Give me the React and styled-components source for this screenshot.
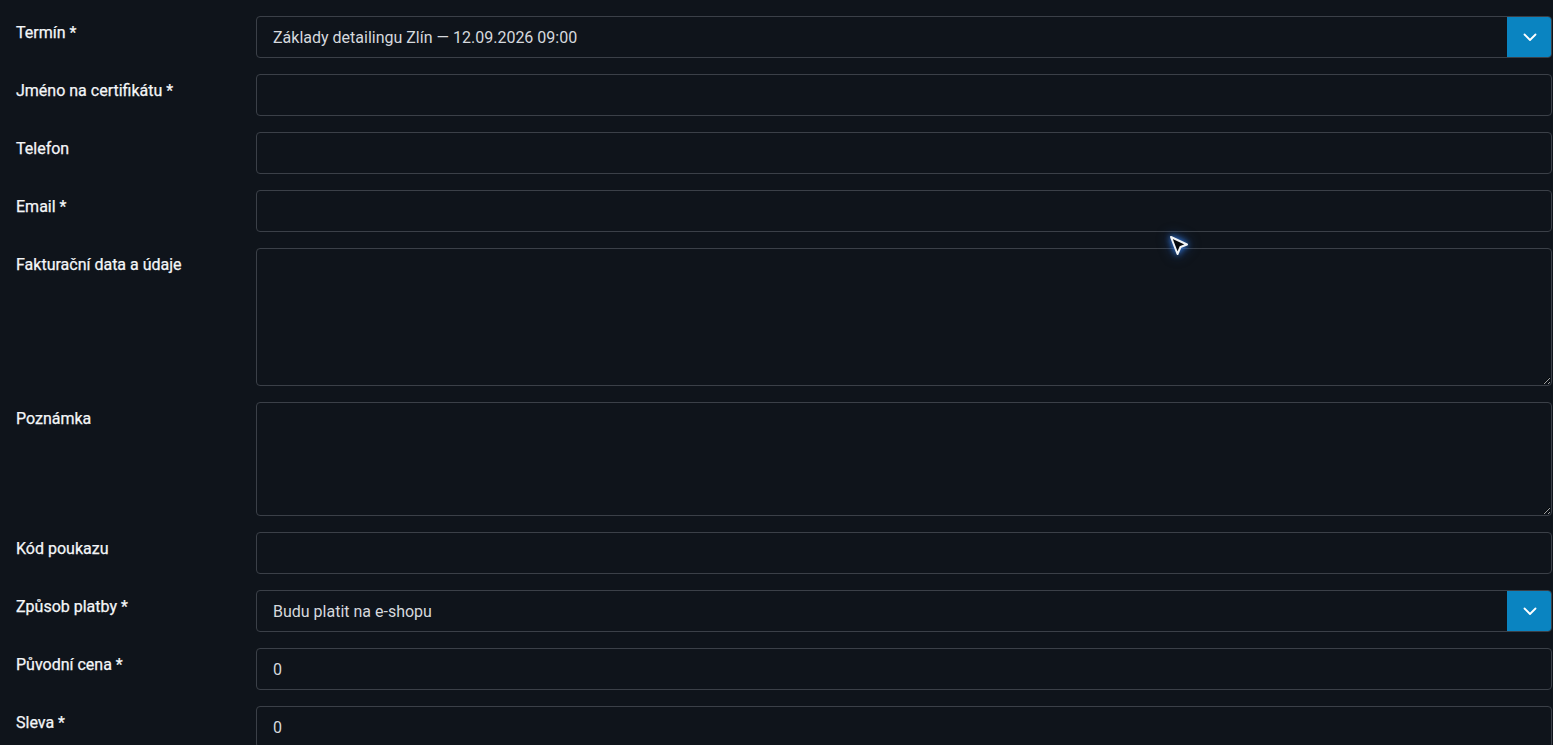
import React from "react";
import styled, { createGlobalStyle } from "styled-components";

const GlobalStyle = createGlobalStyle`
  html, body {
    margin: 0;
    padding: 0;
    background: #0f141b;
  }
  body {
    font-family: Roboto, "Noto Sans", "Liberation Sans", sans-serif;
    color: #e6e8eb;
  }
  * { box-sizing: border-box; }
`;

const Page = styled.div`
  position: relative;
  min-height: 745px;
  background: #0f141b;
  overflow: hidden;
`;

const Form = styled.form`
  display: grid;
  grid-template-columns: 240px 1fr;
  row-gap: 16px;
  padding: 16px 1px 16px 16px;
`;

const Label = styled.label`
  font-size: 16px;
  line-height: 19px;
  font-weight: 400;
  color: #f4f6f8;
  padding-top: 7px;
  -webkit-text-stroke: 0.25px #f4f6f8;
`;

const fieldBase = `
  width: 100%;
  background: #0f141b;
  border: 1px solid #3b4048;
  border-radius: 4px;
  color: #d6d9de;
  font-family: Roboto, "Noto Sans", "Liberation Sans", sans-serif;
  font-size: 16px;
  outline: none;
`;

const TextInput = styled.input`
  ${fieldBase}
  height: 42px;
  padding: 0 16px;
`;

const TextArea = styled.textarea`
  ${fieldBase}
  height: ${(p) => p.$h}px;
  padding: 10px 16px;
  resize: vertical;
  display: block;
`;

const SelectBox = styled.div`
  ${fieldBase}
  height: 42px;
  display: flex;
  align-items: stretch;
  overflow: hidden;
`;

const SelectValue = styled.div`
  flex: 1;
  display: flex;
  align-items: center;
  padding: 0 16px;
  color: #d6d9de;
`;

const SelectButton = styled.div`
  width: 45px;
  margin: -1px -1px -1px 0;
  background: #0a84c1;
  border-radius: 0 4px 4px 0;
  display: flex;
  align-items: center;
  justify-content: center;
`;

const Pointer = styled.svg`
  position: absolute;
  left: 1162px;
  top: 229px;
  filter: drop-shadow(0 0 3px rgba(60, 140, 255, 0.9)) drop-shadow(0 0 6px rgba(40, 110, 220, 0.5));
`;

const Chevron = () => (
  <svg width="14" height="9" viewBox="0 0 14 9" fill="none">
    <path d="M1.5 1.5 7 7l5.5-5.5" stroke="#ffffff" strokeWidth="1.8" strokeLinecap="round" strokeLinejoin="round" />
  </svg>
);

const Select = ({ value }) => (
  <SelectBox>
    <SelectValue>{value}</SelectValue>
    <SelectButton>
      <Chevron />
    </SelectButton>
  </SelectBox>
);

export default function App() {
  return (
    <Page>
      <GlobalStyle />
      <Form>
        <Label>Termín *</Label>
        <Select value="Základy detailingu Zlín — 12.09.2026 09:00" />

        <Label>Jméno na certifikátu *</Label>
        <TextInput defaultValue="" />

        <Label>Telefon</Label>
        <TextInput defaultValue="" />

        <Label>Email *</Label>
        <TextInput defaultValue="" />

        <Label>Fakturační data a údaje</Label>
        <TextArea $h={138} defaultValue="" />

        <Label>Poznámka</Label>
        <TextArea $h={114} defaultValue="" />

        <Label>Kód poukazu</Label>
        <TextInput defaultValue="" />

        <Label>Způsob platby *</Label>
        <Select value="Budu platit na e-shopu" />

        <Label>Původní cena *</Label>
        <TextInput defaultValue="0" />

        <Label>Sleva *</Label>
        <TextInput defaultValue="0" />
      </Form>
      <Pointer width="32" height="34" viewBox="0 0 32 34">
        <path d="M9 8 L25 15.5 L18.5 18 L15.5 25 Z" fill="#06080c" stroke="#f2f4f7" strokeWidth="2" strokeLinejoin="round" />
      </Pointer>
    </Page>
  );
}
